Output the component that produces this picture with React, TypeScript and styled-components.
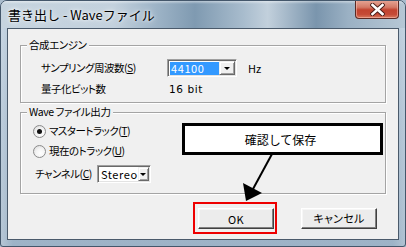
import React from 'react';
import styled, {createGlobalStyle} from 'styled-components';

const GlobalStyle = createGlobalStyle`
  html, body {
    margin: 0;
    padding: 0;
    background: #a9bccd;
  }
  * {
    box-sizing: border-box;
  }
`;

const uiFont = `"Noto Sans CJK JP", "Liberation Sans", sans-serif`;

const Window = styled.div`
  width: 406px;
  height: 247px;
  display: flex;
  flex-direction: column;
  border: 1px solid #44576b;
  border-radius: 7px 7px 3px 3px;
  overflow: hidden;
  background:
    linear-gradient(90deg, rgba(255,255,255,0.25), rgba(255,255,255,0) 3%, rgba(255,255,255,0) 97%, rgba(255,255,255,0.2)),
    linear-gradient(180deg, #b9cbdb 0%, #a7bccf 50%, #9db3c7 100%);
  font-family: ${uiFont};
  font-feature-settings: "palt";
`;

const TitleBar = styled.div`
  height: 27px;
  display: flex;
  align-items: flex-start;
  background:
    linear-gradient(180deg, rgba(255,255,255,0.45) 0, rgba(255,255,255,0) 3px),
    linear-gradient(90deg, #c6d4df 0%, #c3d1dd 28%, #9fb5c8 38%, #7f9ab1 48%, #a8bccd 60%, #c2d0dc 66%, #7a95ad 78%, #9bb1c4 86%, #b6c7d5 100%);
`;

const Title = styled.div`
  padding: 5px 0 0 7px;
  font-size: 13px;
  line-height: 17px;
  color: #000;
  text-shadow: 0 0 6px rgba(255,255,255,0.9), 0 0 3px rgba(255,255,255,0.8);
  font-feature-settings: normal;
`;

const CloseButton = styled.div`
  margin-left: auto;
  margin-right: 6px;
  width: 44px;
  height: 19px;
  margin-top: -1px;
  border: 1px solid #5b2a24;
  border-top: none;
  border-radius: 0 0 4px 4px;
  background: linear-gradient(180deg, #e7a898 0%, #d47a67 40%, #c2432f 55%, #c54a36 80%, #d77a5f 100%);
  box-shadow: inset 0 0 0 1px rgba(255,200,190,0.5);
  display: flex;
  align-items: center;
  justify-content: center;
`;

const Client = styled.div`
  position: relative;
  flex: 1;
  margin: 0 6px 6px 6px;
  border: 1px solid #4a5a6b;
  background: #f0f0f0;
  padding: 16px 12px 0 12px;
  display: flex;
  flex-direction: column;
  font-size: 11px;
  color: #000;
`;

const GroupBox = styled.div<{$height: number; $gapTop?: number}>`
  position: relative;
  height: ${(p) => p.$height}px;
  margin-top: ${(p) => p.$gapTop || 0}px;
  border: 1px solid #a4a4a4;
  box-shadow: inset 1px 1px 0 #fff, 1px 1px 0 #fff;
`;

const GroupTitle = styled.div`
  position: absolute;
  top: -8px;
  left: 6px;
  padding: 0 2px;
  background: #f0f0f0;
  font-size: 10.5px;
  line-height: 14px;
  letter-spacing: -0.4px;
`;

const EngineGrid = styled.div`
  display: grid;
  grid-template-columns: 126px auto 1fr;
  grid-template-rows: 18px 14px;
  row-gap: 5px;
  align-items: center;
  padding: 13px 0 0 20px;
`;

const Label = styled.span`
  font-size: 10.5px;
  line-height: 14px;
  letter-spacing: -0.5px;
  white-space: nowrap;
`;

const Value = styled.span`
  font-family: "DejaVu Sans", sans-serif;
  font-size: 10.5px;
  line-height: 14px;
  padding-left: 2px;
  letter-spacing: 0.6px;
`;

const Unit = styled.span`
  font-size: 11px;
  padding-left: 11px;
`;

const Combo = styled.div<{$width: number}>`
  width: ${(p) => p.$width}px;
  height: 18px;
  display: flex;
  border: 1px solid;
  border-color: #a0a0a0 #fff #fff #a0a0a0;
  box-shadow: inset 1px 1px 0 #696969, inset -1px -1px 0 #e3e3e3;
  background: #fff;
  padding: 2px 1px 1px 2px;
`;

const ComboText = styled.div<{$selected?: boolean}>`
  flex: 1;
  height: 13px;
  padding-left: 1px;
  font-size: 11px;
  line-height: 13px;
  letter-spacing: 0.6px;
  background: ${(p) => (p.$selected ? '#3399ff' : '#fff')};
  color: ${(p) => (p.$selected ? '#fff' : '#000')};
`;

const DropButton = styled.div`
  width: 16px;
  height: 14px;
  margin-top: -1px;
  border: 1px solid;
  border-color: #f0f0f0 #696969 #696969 #f0f0f0;
  box-shadow: inset 1px 1px 0 #fff, inset -1px -1px 0 #a0a0a0;
  background: #f0f0f0;
  display: flex;
  align-items: center;
  justify-content: center;
  &::after {
    content: '';
    border-left: 3px solid transparent;
    border-right: 3px solid transparent;
    border-top: 3px solid #000;
    margin-top: 1px;
  }
`;

const OutputRows = styled.div`
  display: flex;
  flex-direction: column;
  padding: 11px 0 0 12px;
`;

const RadioRow = styled.div<{$gap: number}>`
  display: flex;
  align-items: center;
  height: 14px;
  margin-bottom: ${(p) => p.$gap}px;
`;

const RadioCircle = styled.span<{$checked?: boolean}>`
  width: 13px;
  height: 13px;
  border-radius: 50%;
  border: 1px solid #8b8b8b;
  background: radial-gradient(circle at 60% 65%, #ffffff 0%, #f4f4f4 45%, #d6d6d6 100%);
  margin-right: 3px;
  display: flex;
  align-items: center;
  justify-content: center;
  &::after {
    content: '';
    width: 5px;
    height: 5px;
    border-radius: 50%;
    background: ${(p) => (p.$checked ? '#111' : 'transparent')};
  }
`;

const ChannelRow = styled.div`
  display: flex;
  align-items: center;
  gap: 5px;
  height: 18px;
  margin-left: 2px;
`;

const Footer = styled.div`
  display: flex;
  justify-content: flex-end;
  align-items: center;
  margin-top: 8px;
  padding-right: 9px;
  gap: 24px;
`;

const Highlight = styled.div`
  border: 2px solid #ee0000;
  padding: 4px 1px 3px 3px;
`;

const Button = styled.div`
  width: 76px;
  height: 21px;
  border: 1px solid;
  border-color: #ffffff #404040 #404040 #ffffff;
  box-shadow: inset -1px -1px 0 #808080, inset 1px 1px 0 #f6f6f6;
  background: #ececec;
  display: flex;
  align-items: center;
  justify-content: center;
  font-size: 11px;
  letter-spacing: 0.3px;
`;

const Callout = styled.div`
  position: absolute;
  left: 174px;
  top: 94px;
  width: 201px;
  height: 32px;
  border: 3px solid #000;
  background: #fff;
  display: flex;
  align-items: center;
  justify-content: center;
  padding-right: 4px;
  font-size: 12px;
  font-feature-settings: normal;
`;

const ArrowLayer = styled.svg`
  position: absolute;
  left: 0;
  top: 0;
  width: 100%;
  height: 100%;
  pointer-events: none;
`;

const App = () => {
  return (
    <>
      <GlobalStyle />
      <Window>
        <TitleBar>
          <Title>書き出し - Waveファイル</Title>
          <CloseButton>
            <svg width="15" height="13" viewBox="0 0 15 13">
              <path d="M2.5 2 L12.5 11 M12.5 2 L2.5 11" stroke="#4a1d18" strokeWidth="4.4" strokeLinecap="square" />
              <path d="M2.5 2 L12.5 11 M12.5 2 L2.5 11" stroke="#fff" strokeWidth="2.6" strokeLinecap="square" />
            </svg>
          </CloseButton>
        </TitleBar>
        <Client>
          <GroupBox $height={58}>
            <GroupTitle>合成エンジン</GroupTitle>
            <EngineGrid>
              <Label>サンプリング周波数(<u>S</u>)</Label>
              <Combo $width={70}>
                <ComboText $selected>44100</ComboText>
                <DropButton />
              </Combo>
              <Unit>Hz</Unit>
              <Label>量子化ビット数</Label>
              <Value>16 bit</Value>
            </EngineGrid>
          </GroupBox>
          <GroupBox $height={82} $gapTop={9}>
            <GroupTitle>Wave ファイル出力</GroupTitle>
            <OutputRows>
              <RadioRow $gap={6}>
                <RadioCircle $checked />
                <Label>マスタートラック(<u>T</u>)</Label>
              </RadioRow>
              <RadioRow $gap={7}>
                <RadioCircle />
                <Label>現在のトラック(<u>U</u>)</Label>
              </RadioRow>
              <ChannelRow>
                <Label>チャンネル(<u>C</u>)</Label>
                <Combo $width={54}>
                  <ComboText>Stereo</ComboText>
                  <DropButton />
                </Combo>
              </ChannelRow>
            </OutputRows>
          </GroupBox>
          <Footer>
            <Highlight>
              <Button>OK</Button>
            </Highlight>
            <Button>キャンセル</Button>
          </Footer>
          <Callout>確認して保存</Callout>
          <ArrowLayer>
            <line x1="264" y1="125" x2="245" y2="160" stroke="#000" strokeWidth="2" />
            <polygon points="235,154 254,164 238,172" fill="#000" />
          </ArrowLayer>
        </Client>
      </Window>
    </>
  );
};

export default App;
